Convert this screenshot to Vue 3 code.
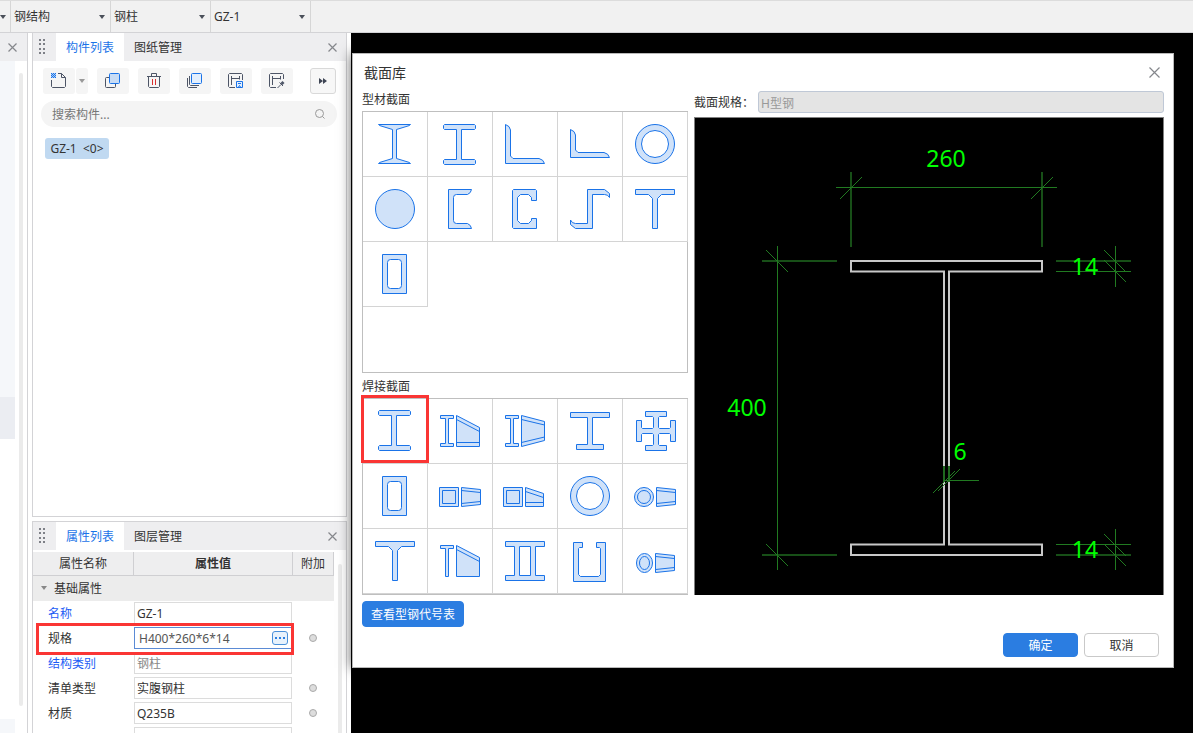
<script setup>
import { ref } from 'vue'

const filters = ref([
  { label: '专业', value: '钢结构' },
  { label: '构件类型', value: '钢柱' },
  { label: '构件', value: 'GZ-1' },
])

const ring = 'M12.5 32a19.5 19.5 0 1 0 39 0a19.5 19.5 0 1 0-39 0ZM18.5 32a13.5 13.5 0 1 0 27 0a13.5 13.5 0 1 0-27 0Z'
const tee = 'M12.5 12.5H51.5V17.5H38.5L34.5 21.5V51.5H29.5V21.5L25.5 17.5H12.5Z'
const tube = 'M19.5 12.5H43.5V51.5H19.5ZM27.5 17.5H35.5Q38.5 17.5 38.5 20.5V43.5Q38.5 46.5 35.5 46.5H27.5Q24.5 46.5 24.5 43.5V20.5Q24.5 17.5 27.5 17.5Z'
const smallH = 'M12.5 16.5H25.5V19.5H20.5V44.5H25.5V47.5H12.5V44.5H17.5V19.5H12.5Z'

const profiles = [
  { name: '工字钢', paths: ['M15.5 12.5H47.5L46.5 13.5L33.5 17.5V46.5L46.5 50.5L47.5 51.5H15.5L16.5 50.5L29.5 46.5V17.5L16.5 13.5Z'] },
  { name: 'H型钢', paths: ['M16.5 12.5H46.5L47.5 13.5V16.5L46.5 17.5H33.5V47.5H46.5L47.5 48.5V51.5L46.5 52.5H16.5L15.5 51.5V48.5L16.5 47.5H28.5V17.5H16.5L15.5 16.5V13.5Z'] },
  { name: '等边角钢', paths: ['M12.5 12.5Q17 14 17.5 18V44L20 46.5H46Q50.5 47.5 51.5 51.5H12.5Z'] },
  { name: '不等边角钢', paths: ['M12.5 17.5Q17 19 17.5 23V38L20 40.5H46Q50.5 41.5 51.5 45.5H12.5Z'] },
  { name: '圆管', paths: [ring] },
  { name: '圆钢', paths: ['M12.5 32a19.5 19.5 0 1 0 39 0a19.5 19.5 0 1 0-39 0Z'] },
  { name: '槽钢', paths: ['M20.5 12.5H43.5Q43 16 39.5 17.5H28.5Q25.5 17.5 25.5 20.5V43.5Q25.5 46.5 28.5 46.5H39.5Q43 48 43.5 51.5H20.5Z'] },
  { name: 'C型钢', paths: ['M20.5 12.5H42.5L43.5 13.5V23.5H38.5V20.5L35.5 17.5H27.5L24.5 20.5V43.5L27.5 46.5H35.5L38.5 43.5V41.5H43.5V51.5H20.5L19.5 50.5V13.5Z'] },
  { name: 'Z型钢', paths: ['M29.5 12.5H46.5L51.5 16.5V20.5Q50 17.5 46.5 17.5H34.5V51.5H17.5L12.5 47.5V43Q14 46.5 17.5 46.5H29.5Z'] },
  { name: 'T型钢', paths: [tee] },
  { name: '方管', paths: [tube] },
]

const welded = [
  { name: '焊接H型', paths: ['M16.5 11.5H46.5L47.5 12.5V15.5L46.5 16.5H33.5V46.5H46.5L47.5 47.5V50.5L46.5 51.5H16.5L15.5 50.5V47.5L16.5 46.5H28.5V16.5H16.5L15.5 15.5V12.5Z'] },
  { name: '单坡变截面H型', paths: [smallH, 'M28.5 16.5L51.5 28.5V47.5H28.5ZM28.5 20.5L51.5 32.5M28.5 43.5H51.5'] },
  { name: '双坡变截面H型', paths: [smallH, 'M28.5 16.5L51.5 22.5V41.5L28.5 47.5ZM28.5 20.5L51.5 26M28.5 43.5L51.5 38'] },
  { name: '不等翼缘H型', paths: ['M12.5 13.5H51.5V18.5H34.5V45.5H45.5V50.5H18.5V45.5H29.5V18.5H12.5Z'] },
  { name: '十字型', paths: ['M22.5 12.5H43.5V17.5H36.5L35.5 18.5V28.5L36.5 29.5H46.5L47.5 28.5V21.5H52.5V42.5H47.5V35.5L46.5 34.5H36.5L35.5 35.5V45.5L36.5 46.5H43.5V51.5H22.5V46.5H29.5L30.5 45.5V35.5L29.5 34.5H19.5L18.5 35.5V42.5H13.5V21.5H18.5V28.5L19.5 29.5H29.5L30.5 28.5V18.5L29.5 17.5H22.5Z'] },
  { name: '焊接箱型', paths: [tube] },
  { name: '双坡变截面箱型', paths: ['M11.5 23.5H30.5V42.5H11.5Z', 'M14.5 26.5H27.5V39.5H14.5Z', 'M33.5 23.5L52.5 25.5V40.5L33.5 42.5ZM33.5 26.5L52.5 28.5M33.5 39.5L52.5 37.5'] },
  { name: '单坡变截面箱型', paths: ['M10.5 23.5H29.5V42.5H10.5Z', 'M13.5 26.5H26.5V39.5H13.5Z', 'M32.5 23.5L50.5 29.5V42.5H32.5ZM32.5 27.5L50.5 33.5M32.5 38.5H50.5'] },
  { name: '焊接圆管', paths: [ring] },
  { name: '变截面圆管', paths: ['M11.5 33a9.5 9.5 0 1 0 19 0a9.5 9.5 0 1 0-19 0Z', 'M14.5 33a6.5 6.5 0 1 0 13 0a6.5 6.5 0 1 0-13 0Z', 'M33.5 23.5L52.5 25.5V40.5L33.5 42.5ZM33.5 26.5L52.5 28.5M33.5 39.5L52.5 37.5'] },
  { name: '焊接T型', paths: [tee] },
  { name: '变截面T型', paths: ['M12.5 16.5H25.5V19.5H20.5V47.5H17.5V19.5H12.5Z', 'M28.5 16.5L51.5 28.5V47.5H28.5ZM28.5 20.5L51.5 32.5'] },
  { name: '双腹板H型', paths: ['M12.5 12.5H51.5V17.5H42.5V46.5H51.5V51.5H12.5V46.5H21.5V17.5H12.5ZM26.5 17.5H37.5V46.5H26.5Z'] },
  { name: 'U型', paths: ['M15.5 13.5H24.5V18.5H21.5L20.5 19.5V45.5L22.5 47.5H40.5L42.5 45.5V19.5L41.5 18.5H38.5V13.5H47.5V52.5H15.5Z'] },
  { name: '椭圆变截面', paths: ['M13.5 34a8 9.5 0 1 0 16 0a8 9.5 0 1 0-16 0Z', 'M16.5 34a5 6.5 0 1 0 10 0a5 6.5 0 1 0-10 0Z', 'M32.5 24.5L51.5 26.5V41.5L32.5 43.5ZM32.5 27.5L51.5 29.5M32.5 40.5L51.5 38.5'] },
]
const selected = ref(0)

const rows = ref([
  { id: 'name', label: '名称', value: 'GZ-1', link: true },
  { id: 'spec', label: '规格', value: 'H400*260*6*14', active: true, dot: true },
  { id: 'struct', label: '结构类别', value: '钢柱', link: true, muted: true },
  { id: 'list', label: '清单类型', value: '实腹钢柱', dot: true },
  { id: 'material', label: '材质', value: 'Q235B', dot: true },
  { id: 'extra', label: '', value: '' },
])
const keyword = ref('')
</script>

<template>
  <div class="app">
    <header class="topbar">
      <button class="stub" aria-label="展开"><i class="caret"></i></button>
      <label v-for="f in filters" :key="f.label" class="pick">
        <select :aria-label="f.label"><option>{{ f.value }}</option></select>
        <i class="caret"></i>
      </label>
    </header>

    <main class="work">
      <aside class="rail">
        <div class="rail-head">
          <button class="close" aria-label="关闭"><svg width="9" height="9"><path d="M.5 .5L8.5 8.5M8.5 .5L.5 8.5" /></svg></button>
        </div>
        <div class="rail-body">
          <div class="rail-list"><div class="rail-current"></div><div class="rail-blank"></div><div class="rail-end"></div></div>
          <div class="rail-scroll"></div>
        </div>
      </aside>

      <div class="side">
        <section class="panel parts">
          <nav class="tabs">
            <svg class="grip" width="6" height="15"><path d="M0 1h2M4 1h2M0 5h2M4 5h2M0 10h2M4 10h2M0 14h2M4 14h2" /></svg>
            <button class="tab on">构件列表</button>
            <button class="tab">图纸管理</button>
            <button class="close" aria-label="关闭"><svg width="9" height="9"><path d="M.5 .5L8.5 8.5M8.5 .5L.5 8.5" /></svg></button>
          </nav>
          <div class="tools">
            <div class="split">
              <button class="tool" aria-label="新建">
                <svg width="20" height="20" viewBox="0 0 20 20"><path class="ink" d="M9 2.500H12.500L16.500 6.500V15.500L15.500 16.500H3.500L2.500 15.500V9M12.500 2.500V6.500H16.500" /><path class="wash" d="M2 2H7V7H2Z" /><path class="check" d="M2 2.500h5M3 3.500h4M2 4.500h5M3 5.500h4M2 6.500h5" /></svg>
              </button>
              <button class="drop" aria-label="更多新建方式"><i class="caret"></i></button>
            </div>
            <button class="tool" aria-label="复制">
              <svg width="20" height="20" viewBox="0 0 20 20"><rect class="ink" x="2.500" y="6.500" width="10" height="10" rx="1" /><rect class="blue pale" x="6.500" y="2.500" width="10" height="10" rx="1" /></svg>
            </button>
            <button class="tool" aria-label="删除">
              <svg width="20" height="20" viewBox="0 0 20 20"><path class="ink" d="M3 5.500H17M7.500 5V2.500H12.500V5M4.500 6V15.500L5.500 16.500H14.500L15.500 15.500V6" /><path class="red" d="M8.500 8V14M11.500 8V14" /></svg>
            </button>
            <button class="tool" aria-label="层间复制">
              <svg width="20" height="20" viewBox="0 0 20 20"><path class="ink" d="M2.500 7V15.500L3.500 16.500H12M4.500 5V13.500L5.500 14.500H14" /><rect class="blue light" x="6.500" y="2.500" width="10" height="10" rx="1" /></svg>
            </button>
            <button class="tool" aria-label="存档">
              <svg width="20" height="20" viewBox="0 0 20 20"><path class="ink" d="M9 16.500H3.500L2.500 15.500V3.500L3.500 2.500H15.500L16.500 3.500V9M5.500 5V14M13.500 5V8.500M5.500 7.500H13.500" /><path class="blue light" d="M10.500 10.500H16.500V16.500H10.500Z" /><path class="blue" d="M12 12.500H15M12.500 16L13.500 14.500L14.500 16" /></svg>
            </button>
            <button class="tool" aria-label="提取">
              <svg width="20" height="20" viewBox="0 0 20 20"><path class="ink" d="M9 16.500H3.500L2.500 15.500V3.500L3.500 2.500H15.500L16.500 3.500V8M5.500 5V14M13.500 5V8.500M5.500 7.500H13.500" /><path class="ink" d="M10.500 17L14 13.500M12.500 11.500L16 15" /><path class="tip" d="M13.500 12L15.500 10L17.500 12L15.500 14Z" /></svg>
            </button>
            <button class="more" aria-label="更多"><svg width="8" height="6"><path d="M0 0L4 3L0 6ZM4 0L8 3L4 6Z" /></svg></button>
          </div>
          <label class="search">
            <input v-model="keyword" type="text" placeholder="搜索构件..." aria-label="搜索构件" />
            <svg width="12" height="12"><circle cx="5.500" cy="5.500" r="4" /><path d="M8.500 8.500L10.500 10.500" /></svg>
          </label>
          <button class="chip">GZ-1&nbsp; &lt;0&gt;</button>
        </section>

        <section class="panel props">
          <nav class="tabs">
            <svg class="grip" width="6" height="15"><path d="M0 1h2M4 1h2M0 5h2M4 5h2M0 10h2M4 10h2M0 14h2M4 14h2" /></svg>
            <button class="tab on">属性列表</button>
            <button class="tab">图层管理</button>
            <button class="close" aria-label="关闭"><svg width="9" height="9"><path d="M.5 .5L8.5 8.5M8.5 .5L.5 8.5" /></svg></button>
          </nav>
          <div class="props-body">
            <table>
              <colgroup><col class="c1" /><col class="c2" /><col class="c3" /></colgroup>
              <thead><tr><th>属性名称</th><th class="strong">属性值</th><th>附加</th></tr></thead>
              <tbody>
                <tr class="group"><td colspan="3"><i class="caret"></i>基础属性</td></tr>
                <tr v-for="r in rows" :key="r.id">
                  <td class="key" :class="{ link: r.link }">
                    <label :for="r.id">{{ r.label }}</label>
                    <span v-if="r.active" class="mark"></span>
                  </td>
                  <td class="val">
                    <div class="field" :class="{ active: r.active, muted: r.muted }">
                      <input :id="r.id" v-model="r.value" type="text" />
                      <button v-if="r.active" aria-label="选择规格"><svg width="10" height="2"><path d="M0 1h2M4 1h2M8 1h2" /></svg></button>
                    </div>
                  </td>
                  <td class="add"><input v-if="r.dot" type="radio" :aria-label="r.label + '附加'" /></td>
                </tr>
              </tbody>
            </table>
            <div class="props-scroll"></div>
          </div>
        </section>
      </div>

      <div class="stage">
        <section class="dialog" role="dialog" aria-label="截面库">
          <div class="title">
            <h1>截面库</h1>
            <button class="close" aria-label="关闭"><svg width="11" height="11"><path d="M.5 .5L10.5 10.5M10.5 .5L.5 10.5" /></svg></button>
          </div>
          <div class="columns">
            <div class="library">
              <h2>型材截面</h2>
              <div class="sections tall">
                <button v-for="s in profiles" :key="s.name" class="cell" :aria-label="s.name">
                  <svg width="64" height="64"><path v-for="p in s.paths" :key="p" :d="p" /></svg>
                </button>
              </div>
              <h2 class="second">焊接截面</h2>
              <div class="sections">
                <button v-for="(s, i) in welded" :key="s.name" class="cell" :class="{ chosen: selected === i }" :aria-label="s.name" @click="selected = i">
                  <svg width="64" height="64"><path v-for="p in s.paths" :key="p" :d="p" /></svg>
                </button>
              </div>
              <button class="btn primary codes">查看型钢代号表</button>
            </div>
            <div class="preview">
              <div class="spec-line">
                <label for="section-spec">截面规格：</label>
                <input id="section-spec" type="text" value="H型钢" disabled />
              </div>
              <div class="drawing">
                <svg viewBox="0 0 468 477" preserveAspectRatio="xMidYMin meet">
                  <path class="steel" d="M156 143H347V153.500H254V426.500H347V437H156V426.500H249V153.500H156Z" />
                  <path class="ext" d="M156 54V129M347 54V129M67 143H142M67 437H142M361 143H436M361 437H436" />
                  <path class="dim" d="M141 69.500H362M145 81L167 59M336 81L358 59M82.500 128V452M71 132L93 154M71 426L93 448" />
                  <path class="dim" d="M361 153.500H436M420.500 128V169M409 132L431 154M409 142L431 164M361 426.500H436M420.500 411V452M409 416L431 438M409 426L431 448" />
                  <path class="ext web" d="M249 348V364M254 348V364" />
                  <path class="dim" d="M249 362.500H284M238 375L260 353M243 373L265 351" />
                  <text x="251" y="49">260</text>
                  <text x="52" y="298">400</text>
                  <text x="265" y="342">6</text>
                  <text x="390" y="157">14</text>
                  <text x="390" y="440">14</text>
                </svg>
              </div>
              <div class="actions">
                <button class="btn primary">确定</button>
                <button class="btn">取消</button>
              </div>
            </div>
          </div>
        </section>
      </div>
    </main>
  </div>
</template>

<style>
html, body { margin: 0; background: #fff; }
</style>

<style scoped>
.app { height: 100vh; display: flex; flex-direction: column; overflow: hidden; color: #333; font: 12px/16px "Noto Sans", "Noto Sans CJK SC", sans-serif; }
.app *, .app *::before, .app *::after { box-sizing: border-box; }
button, input, select { font: inherit; color: inherit; margin: 0; padding: 0; border: 0; background: none; outline: none; }
button { cursor: pointer; }
svg { display: block; fill: none; }
h1, h2 { margin: 0; font-weight: 400; }
.caret { width: 0; height: 0; border: 3px solid transparent; border-top: 4px solid #4a4f59; border-bottom: 0; }

.topbar { flex: none; height: 32px; display: flex; background: #f1f1f1; border-top: 1px solid #dcdcdc; }
.stub { width: 11px; border-right: 1px solid #d6d6d6; display: flex; align-items: center; }
.pick { width: 100px; position: relative; border-right: 1px solid #d6d6d6; display: flex; }
.pick select { width: 100%; appearance: none; padding-left: 3px; }
.pick .caret { position: absolute; right: 5px; top: 14px; pointer-events: none; }

.work { flex: 1; min-height: 0; display: grid; grid-template-columns: 28px 323px 1fr; border-top: 1px solid #d3d3d6; }
.close { display: grid; place-items: center; }
.close svg { stroke: #85878c; stroke-width: 1.2; overflow: visible; }

.rail { border-right: 1px solid #d3d3d6; display: flex; flex-direction: column; min-height: 0; }
.rail-head { flex: none; height: 28px; background: #eeeef0; display: flex; align-items: center; padding-left: 8px; }
.rail-body { flex: 1; display: flex; gap: 4px; min-height: 0; }
.rail-list { width: 15px; display: flex; flex-direction: column; background: #f5f7fa; padding-top: 336px; }
.rail-current { flex: none; height: 42px; background: #ebedf2; }
.rail-blank { flex: 1; background: #fff; }
.rail-end { flex: none; height: 14px; }
.rail-scroll { width: 4px; margin: 12px 0 27px; border-radius: 2px; background: #ebebeb; }

.side { display: flex; flex-direction: column; gap: 4px; padding: 0 4px; min-height: 0; }
.panel { border: 1px solid #d3d3d6; border-top: 0; background: #fff; }
.parts { flex: 484 1 0; min-height: 0; }
.props { flex: 212 1 0; min-height: 0; border-top: 1px solid #d3d3d6; border-bottom: 0; overflow: hidden; }
.tabs { height: 28px; display: flex; background: #eeeef0; }
.tabs .grip { margin: 6px 11px 0 6px; stroke: #7e8087; stroke-width: 2; }
.tab { width: 68px; height: 28px; padding-top: 2px; }
.tab.on { background: #fff; color: #1a73e8; }
.tabs .close { margin-left: auto; width: 28px; padding-top: 1px; }

.tools { display: flex; gap: 9px; padding: 7px 10px; }
.tool { width: 32px; height: 26px; display: grid; place-items: center; background: #f5f5f5; border-radius: 3px; }
.split { display: flex; gap: 1px; }
.drop { width: 12px; display: grid; place-items: center; background: #f5f5f5; border-radius: 3px; }
.drop .caret { border-top-color: #999; }
.ink { stroke: #4d5566; }
.blue { stroke: #1a73e8; }
.wash { fill: #a9cbf5; }
.check { stroke: #1a73e8; stroke-dasharray: 1 1; }
.pale { fill: #c8dcf5; }
.light { fill: #e3effd; }
.red { stroke: #d93030; }
.tip { fill: #4d5566; }
.more { width: 26px; height: 26px; margin-left: auto; display: grid; place-items: center; border: 1px solid #d9d9d9; border-radius: 3px; background: #f7f7f7; }
.more svg { fill: #3e4554; }

.search { height: 26px; margin: 0 9px 0 8px; padding: 0 11px; display: flex; align-items: center; border-radius: 13px; background: #f4f4f4; }
.search input { flex: 1; min-width: 0; padding-top: 2px; }
.search input::placeholder { color: #777; opacity: 1; }
.search svg { stroke: #999; }
.chip { margin: 11px 0 0 12px; width: 64px; height: 21px; border-radius: 3px; background: #c0d9f1; white-space: nowrap; }

.props-body { display: flex; gap: 4px; margin-top: 2px; }
table { width: 301px; table-layout: fixed; border-spacing: 0; }
.c1 { width: 101px; }
.c2 { width: 159px; }
.c3 { width: 41px; }
th, td { padding: 0; height: 25px; }
th { height: 24px; padding-top: 2px; font-weight: 400; background: #eeeeef; border: solid #cfcfd2; border-width: 0 1px 1px 0; }
.strong { font-weight: 600; }
.group td { background: #ececec; padding-top: 2px; }
.group .caret { display: inline-block; margin: 0 7px 3px 8px; border-top-color: #888; }
.key { position: relative; padding: 2px 0 0 15px; }
.link { color: #1c5cf5; }
.mark { position: absolute; z-index: 1; left: 3px; top: -3px; width: 258px; height: 32px; border: 3px solid #fa3534; pointer-events: none; }
.field { height: 22px; width: 158px; display: flex; align-items: center; border: 1px solid #dcdcdc; background: #fff; padding: 0 3px 0 2px; }
.field input { flex: 1; min-width: 0; padding-top: 2px; }
.field.active { border-color: #5b8bd5; padding-left: 4px; color: #555; }
.field.muted { color: #888; }
.field button { width: 16px; height: 14px; display: grid; place-items: center; border: 1px solid #4a90d9; border-radius: 3px; background: #e8f2fc; }
.field button svg { stroke: #2d7fe0; stroke-width: 2; }
.add { padding-right: 1px; }
.add input { appearance: none; display: block; width: 8px; height: 8px; margin: 0 auto; border: 1px solid #aaa; border-radius: 50%; background: #ddd; }
.props-scroll { width: 4px; margin-top: 12px; border-radius: 2px 2px 0 0; background: #ebebeb; }

.stage { background: #000; display: flex; min-width: 0; align-items: flex-start; }
.dialog { flex: 1; min-width: 0; margin: 20px 19px 0 1px; padding-bottom: 10px; border: 1px solid #b9b9b9; background: #fff; box-shadow: 0 0 12px rgba(0, 0, 0, .7); }
.title { height: 37px; display: flex; align-items: center; padding: 0 13px 0 11px; }
.title h1 { flex: 1; font-size: 14px; line-height: 20px; }
.columns { display: grid; grid-template-columns: 326px 1fr; gap: 6px; padding: 0 9px; }
h2 { font-size: 12px; line-height: 18px; height: 20px; }
.library { display: flex; flex-direction: column; align-items: flex-start; }
h2.second { height: 25px; padding-top: 5px; }
.sections { width: 326px; display: grid; grid-template-columns: repeat(5, 65px); align-content: start; border: 1px solid #bfbfbf; border-right: 0; }
.sections.tall { height: 262px; border-right: 1px solid #bfbfbf; }
.cell { position: relative; width: 65px; height: 65px; border: solid #d4d4d4; border-width: 0 1px 1px 0; }
.cell svg path { fill: #d0e2f9; stroke: #1a73e8; fill-rule: evenodd; }
.chosen::after { content: ""; position: absolute; left: -2px; top: -4px; width: 68px; height: 68px; border: 3px solid #fa3534; }
.btn { width: 75px; height: 24px; padding-top: 1px; border: 1px solid #c9c9c9; border-radius: 4px; background: #fff; }
.btn.primary { border-color: #2b7de1; background: #2b7de1; color: #fff; }
.btn.codes { width: 102px; height: 26px; margin-top: 6px; padding-top: 2px; }

.preview { display: flex; flex-direction: column; }
.spec-line { height: 22px; display: flex; align-items: center; }
.spec-line label { width: 64px; padding-top: 2px; white-space: nowrap; }
.spec-line input { flex: 1; min-width: 0; height: 22px; padding: 2px 2px 0; border: 1px solid #bfc8d6; border-radius: 3px; background: #e4e4e4; color: #999; }
.drawing { margin-top: 4px; border: 1px solid #808080; border-bottom: 0; background: #000; }
.drawing svg { width: 100%; }
.steel { stroke: #c8c8c8; stroke-width: 2; }
.ext { stroke: #174f17; stroke-width: 2; }
.ext.web { stroke: #1f6a1f; }
.dim { stroke: #217a21; }
.drawing text { fill: #0f0; font-size: 23px; text-anchor: middle; }
.actions { display: flex; justify-content: flex-end; gap: 6px; padding: 38px 5px 0 0; }
</style>
